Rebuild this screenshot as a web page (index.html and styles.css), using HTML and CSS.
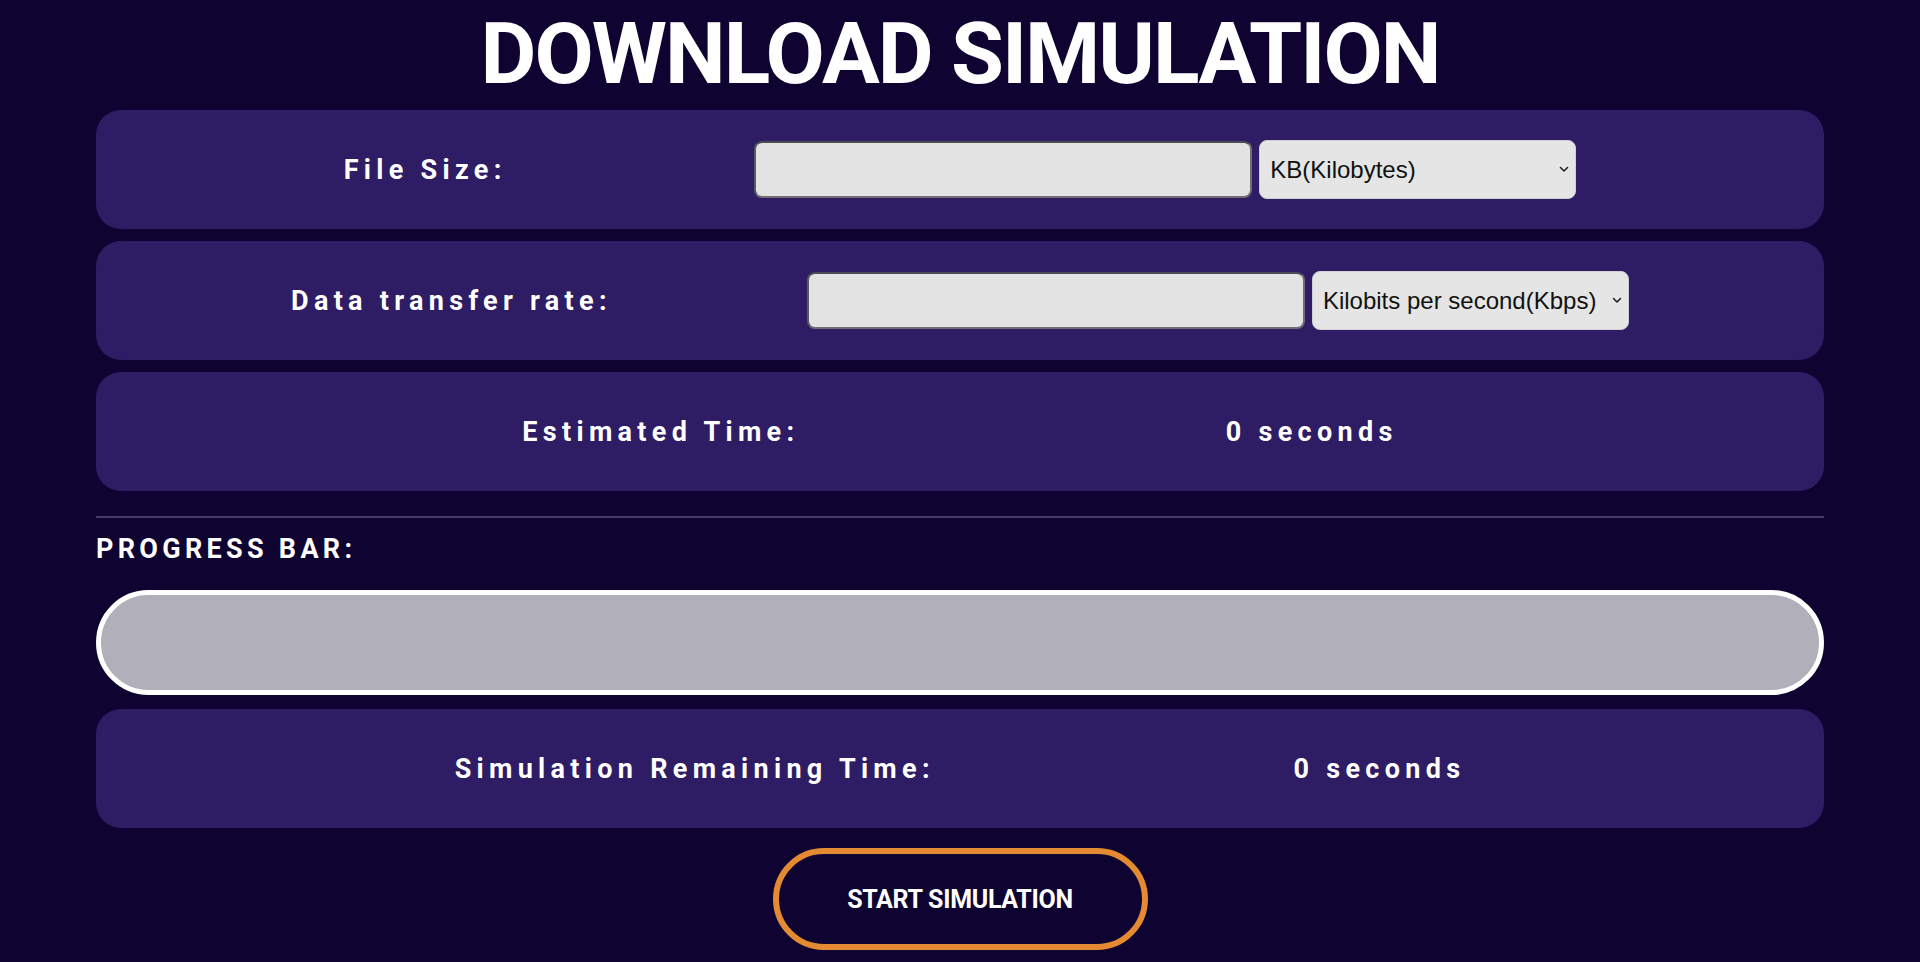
FILE: index.html
```html
<!DOCTYPE html>
<html lang="en">
<head>
<meta charset="utf-8">
<title>Download Simulation</title>
<link rel="stylesheet" href="styles.css">
</head>
<body>
<h1 class="title">DOWNLOAD SIMULATION</h1>
<main class="wrap">
  <div class="panels">
    <div class="row">
      <label class="label" for="size">File Size:</label>
      <div class="group">
        <input id="size" class="num" type="text">
        <div class="select-wrap">
          <select class="unit">
            <option>KB(Kilobytes)</option>
            <option>MB(Megabytes)</option>
            <option>GB(Gigabytes)</option>
          </select>
          <svg class="chev" width="10" height="7" viewBox="0 0 10 7"><path d="M1.5 1.5 L5 5 L8.5 1.5" fill="none" stroke="#222" stroke-width="1.6" stroke-linecap="round" stroke-linejoin="round"/></svg>
        </div>
      </div>
    </div>
    <div class="row">
      <label class="label" for="rate">Data transfer rate:</label>
      <div class="group">
        <input id="rate" class="num" type="text">
        <div class="select-wrap">
          <select class="unit">
            <option>Kilobits per second(Kbps)</option>
            <option>Megabits per second(Mbps)</option>
          </select>
          <svg class="chev" width="10" height="7" viewBox="0 0 10 7"><path d="M1.5 1.5 L5 5 L8.5 1.5" fill="none" stroke="#222" stroke-width="1.6" stroke-linecap="round" stroke-linejoin="round"/></svg>
        </div>
      </div>
    </div>
    <div class="row">
      <span class="label">Estimated Time:</span>
      <span class="label">0 seconds</span>
    </div>
  </div>
  <hr class="divider">
  <p class="section-label">PROGRESS BAR:</p>
  <div class="progress"><div class="progress-fill" style="width:0%"></div></div>
  <div class="row row-remaining">
    <span class="label">Simulation Remaining Time:</span>
    <span class="label">0 seconds</span>
  </div>
  <div class="actions">
    <button class="start" type="button">START SIMULATION</button>
  </div>
</main>
</body>
</html>
```
FILE: styles.css
```css
* { box-sizing: border-box; }

html, body {
  margin: 0;
  padding: 0;
  background: #0f0431;
}

body {
  font-family: Roboto, "Liberation Sans", sans-serif;
  color: #ffffff;
}

.title {
  margin: 0 0 6px;
  padding-top: 4px;
  font-size: 86px;
  line-height: 100px;
  font-weight: 700;
  letter-spacing: -2px;
  text-align: center;
  color: #ffffff;
}

.wrap {
  width: 90%;
  margin: 0 auto;
}

.panels {
  display: flex;
  flex-direction: column;
  gap: 12px;
}

.row {
  display: flex;
  justify-content: space-evenly;
  align-items: center;
  height: 119px;
  background: #2e1d65;
  border-radius: 25px;
}

.label {
  font-size: 27px;
  font-weight: 700;
  letter-spacing: 5.3px;
  color: #ffffff;
  white-space: nowrap;
}

.group {
  display: flex;
  align-items: center;
  gap: 7px;
}

.num {
  width: 498px;
  height: 57px;
  background: #e3e3e3;
  border: 2px solid #6e6e74;
  border-top-color: #4c4c54;
  border-left-color: #5a5a62;
  border-radius: 8px;
  font-size: 24px;
  padding: 0 10px;
  outline: none;
}

.select-wrap {
  position: relative;
  display: flex;
}

.unit {
  -webkit-appearance: none;
  appearance: none;
  width: 317px;
  height: 59px;
  background: #e5e5e5;
  border: 1px solid #cfcfd4;
  border-radius: 8px;
  padding: 0 30px 0 10px;
  font-family: "Liberation Sans", Arial, sans-serif;
  font-size: 24px;
  color: #111111;
}

.chev {
  position: absolute;
  right: 7px;
  top: 26px;
  pointer-events: none;
}

.divider {
  margin: 25px 0 0;
  height: 2px;
  border: none;
  background: #463a6e;
}

.section-label {
  margin: 16px 0 0;
  font-size: 27px;
  line-height: 30px;
  font-weight: 700;
  letter-spacing: 4.3px;
  color: #ffffff;
}

.progress {
  margin-top: 26px;
  height: 105px;
  border: 5px solid #ffffff;
  border-radius: 60px;
  background: #b0afba;
  overflow: hidden;
}

.progress-fill {
  height: 100%;
  background: #e48a33;
}

.row-remaining {
  margin-top: 14px;
}

.actions {
  display: flex;
  justify-content: center;
  margin-top: 20px;
}

.start {
  width: 375px;
  height: 102px;
  border: 6px solid #e48a33;
  border-radius: 60px;
  background: transparent;
  color: #ffffff;
  font-family: Roboto, "Liberation Sans", sans-serif;
  font-size: 25px;
  font-weight: 700;
  letter-spacing: -0.3px;
  cursor: pointer;
}
```
